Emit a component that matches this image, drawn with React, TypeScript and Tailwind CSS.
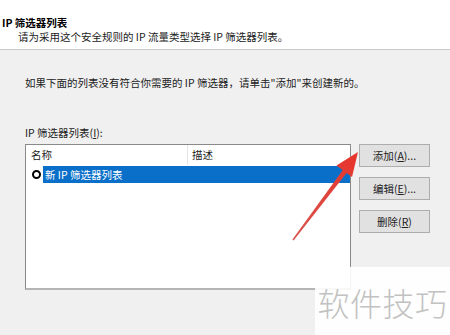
const font = { fontFamily: '"Noto Sans CJK SC", "Noto Sans", sans-serif' }

const buttons = [
    { label: "添加(", key: "A", tail: ")..." },
    { label: "编辑(", key: "E", tail: ")..." },
    { label: "删除(", key: "R", tail: ")" },
]

const App = () => {
    return (
        <div
            className="relative w-[450px] h-[335px] overflow-hidden bg-[#f0f0f0] text-[10.5px] leading-[14px] text-[#222]"
            style={font}
        >
            {/* header */}
            <div className="h-[50px] bg-white border-b border-[#c9c9c9] pt-[16px]">
                <div className="pl-[2px] font-bold text-black">IP 筛选器列表</div>
                <div className="pl-[18px]">请为采用这个安全规则的 IP 流量类型选择 IP 筛选器列表。</div>
            </div>

            <div className="pl-[25px]">
                <p className="mt-[26px]">如果下面的列表没有符合你需要的 IP 筛选器，请单击"添加"来创建新的。</p>
                <p className="mt-[36px]">
                    IP 筛选器列表(<span className="underline">I</span>):
                </p>

                <div className="flex mt-[4px] gap-[8px]">
                    <div className="w-[326px] h-[146px] bg-white border border-[#8a8a8a] border-b-[#b5b5b5] border-b-2">
                        <div className="flex h-[20px] items-center">
                            <div className="w-[162px] h-full flex items-center pl-[5px] border-r border-[#e5e5e5]">名称</div>
                            <div className="pl-[4px]">描述</div>
                        </div>
                        <div className="flex items-center mt-[1px] h-[17px]">
                            <span className="ml-[6px] w-[9px] h-[9px] rounded-full border-2 border-black"></span>
                            <div className="ml-[2px] flex-1 h-full bg-[#0a6fc9] text-white flex items-center pl-[2px]">
                                新 IP 筛选器列表
                            </div>
                        </div>
                    </div>

                    <div className="flex flex-col gap-[10px]">
                        {buttons.map((b) => (
                            <button
                                key={b.key}
                                className="w-[71px] h-[23px] bg-[#e1e1e1] border border-[#adadad] text-[#222] text-[10.5px]"
                                style={font}
                            >
                                {b.label}
                                <span className="underline">{b.key}</span>
                                {b.tail}
                            </button>
                        ))}
                    </div>
                </div>
            </div>

            {/* red arrow */}
            <svg className="absolute inset-0" width="450" height="335" viewBox="0 0 450 335">
                <defs>
                    <linearGradient id="ar" x1="293" y1="240" x2="358" y2="153" gradientUnits="userSpaceOnUse">
                        <stop offset="0" stopColor="#d6564f" />
                        <stop offset="1" stopColor="#e8332b" />
                    </linearGradient>
                </defs>
                <polygon points="292.4,239.6 293.6,240.4 347,172.5 343.2,169.6" fill="url(#ar)" />
                <polygon points="358,152 352,177 336.5,165.5" fill="url(#ar)" />
            </svg>

            {/* watermark */}
            <div className="absolute left-[315px] top-[267px] w-[135px] h-[68px] bg-white/90 flex items-start justify-center pt-[17px]">
                <span className="text-[32px] leading-[36px] text-[#c2c2c2] font-light tracking-[0.5px]">软件技巧</span>
            </div>
        </div>
    )
}

export default App
